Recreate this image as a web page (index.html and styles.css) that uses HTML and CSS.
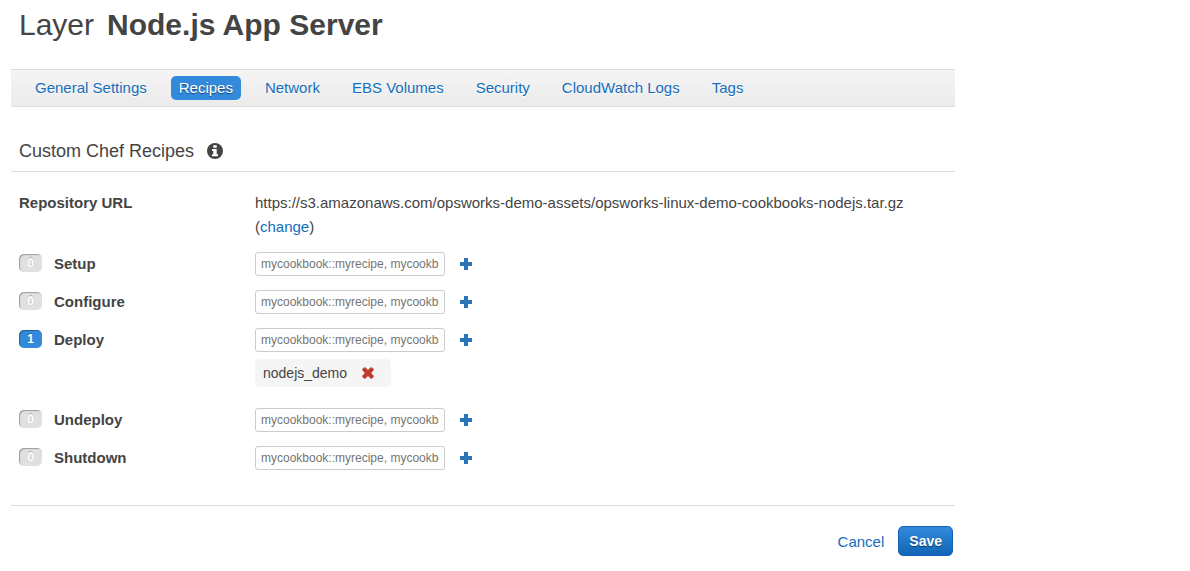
FILE: index.html
```html
<!DOCTYPE html>
<html lang="en">
<head>
<meta charset="utf-8">
<title>Layer Node.js App Server</title>
<link rel="stylesheet" href="styles.css">
</head>
<body>
<svg class="sprite" aria-hidden="true">
  <symbol id="plus" viewBox="0 0 12 12"><path d="M4 0h4v4h4v4H8v4H4V8H0V4h4z" fill="currentColor" shape-rendering="crispEdges"/></symbol>
</svg>
<main class="page">
  <h1 class="title"><span class="title-kind">Layer</span> <span>Node.js App Server</span></h1>
  <nav class="tabs">
    <a class="tab" href="#general">General Settings</a>
    <a class="tab tab-active" href="#recipes" aria-current="page">Recipes</a>
    <a class="tab" href="#network">Network</a>
    <a class="tab" href="#ebs">EBS Volumes</a>
    <a class="tab" href="#security">Security</a>
    <a class="tab" href="#logs">CloudWatch Logs</a>
    <a class="tab" href="#tags">Tags</a>
  </nav>
  <form>
    <h2 class="section-title">Custom Chef Recipes
      <svg class="info" viewBox="0 0 16 16" role="img" aria-label="Info"><circle cx="8" cy="8" r="8" fill="#444"/><path d="M6.3 2.2h3.4v2.6H6.3zM5 6h4.7v5.3H11v2H5v-2h1.3V8H5z" fill="#fff"/></svg>
    </h2>
    <div class="fields">
      <div class="row row-text">
        <div class="label">Repository URL</div>
        <div class="value">https://s3.amazonaws.com/opsworks-demo-assets/opsworks-linux-demo-cookbooks-nodejs.tar.gz<br>(<a href="#change">change</a>)</div>
      </div>
      <div class="row">
        <label class="label" for="setup"><span class="badge">0</span>Setup</label>
        <div class="entry"><input class="recipe" id="setup" type="text" placeholder="mycookbook::myrecipe, mycookbook::myrecipe2"><button class="icon-button" type="button" aria-label="Add setup recipe"><svg class="plus"><use href="#plus"/></svg></button></div>
      </div>
      <div class="row">
        <label class="label" for="configure"><span class="badge">0</span>Configure</label>
        <div class="entry"><input class="recipe" id="configure" type="text" placeholder="mycookbook::myrecipe, mycookbook::myrecipe2"><button class="icon-button" type="button" aria-label="Add configure recipe"><svg class="plus"><use href="#plus"/></svg></button></div>
      </div>
      <div class="row">
        <label class="label" for="deploy"><span class="badge badge-on">1</span>Deploy</label>
        <div>
          <div class="entry"><input class="recipe" id="deploy" type="text" placeholder="mycookbook::myrecipe, mycookbook::myrecipe2"><button class="icon-button" type="button" aria-label="Add deploy recipe"><svg class="plus"><use href="#plus"/></svg></button></div>
          <div class="chip">nodejs_demo<button class="icon-button remove" type="button" aria-label="Remove nodejs_demo"><svg class="cross" viewBox="0 0 12 12"><path d="M3 .4 6 3.2 9 .4Q10.8.4 11.6 3L8.8 6l2.8 3Q10.8 11.6 9 11.6L6 8.8l-3 2.8Q1.2 11.6.4 9L3.2 6 .4 3Q1.2.4 3 .4z" fill="currentColor" stroke="currentColor" stroke-width=".6"/></svg></button></div>
        </div>
      </div>
      <div class="row">
        <label class="label" for="undeploy"><span class="badge">0</span>Undeploy</label>
        <div class="entry"><input class="recipe" id="undeploy" type="text" placeholder="mycookbook::myrecipe, mycookbook::myrecipe2"><button class="icon-button" type="button" aria-label="Add undeploy recipe"><svg class="plus"><use href="#plus"/></svg></button></div>
      </div>
      <div class="row">
        <label class="label" for="shutdown"><span class="badge">0</span>Shutdown</label>
        <div class="entry"><input class="recipe" id="shutdown" type="text" placeholder="mycookbook::myrecipe, mycookbook::myrecipe2"><button class="icon-button" type="button" aria-label="Add shutdown recipe"><svg class="plus"><use href="#plus"/></svg></button></div>
      </div>
    </div>
    <div class="actions">
      <a class="cancel" href="#cancel">Cancel</a>
      <button class="save" type="submit">Save</button>
    </div>
  </form>
</main>
</body>
</html>
```
FILE: styles.css
```css
* { box-sizing: border-box; }
body {
  margin: 0;
  background: #fff;
  color: #444;
  font: 15px/24px "Liberation Sans", Arial, sans-serif;
}
a { color: #146eba; text-decoration: none; }
.sprite { display: none; }
.page { max-width: 944px; margin: 0 11px; }
.title {
  display: flex;
  gap: 13px;
  margin: 0 0 19px;
  padding: 0 8px;
  font-size: 30px;
  line-height: 50px;
}
.title-kind { font-weight: normal; }
.tabs {
  display: flex;
  flex-wrap: wrap;
  gap: 16px;
  padding: 6px 16px;
  border: solid #ddd;
  border-width: 1px 0;
  background: linear-gradient(#f5f5f5, #ebebeb);
}
.tab {
  padding: 0 8px;
  border-radius: 5px;
  text-shadow: 0 1px 0 #fff;
}
.tab-active {
  background: #338adb;
  color: #fff;
  text-shadow: 0 1px 1px rgba(0, 0, 0, 0.5);
}
.section-title {
  display: flex;
  align-items: center;
  gap: 13px;
  margin: 24px 0 0;
  padding: 0 8px;
  border-bottom: 1px solid #ddd;
  font-size: 18px;
  font-weight: normal;
  line-height: 40px;
}
.info { width: 16px; height: 16px; }
.fields { padding: 19px 8px 21px; }
.row {
  display: grid;
  grid-template-columns: 236px 1fr;
  margin-bottom: 14px;
}
.row-text { margin-bottom: 13px; }
.label { display: flex; align-items: flex-start; gap: 12px; font-weight: bold; }
.value { overflow-wrap: anywhere; }
.badge {
  width: 23px;
  height: 18px;
  margin-top: 2px;
  border-radius: 5px;
  background: #e0e0e0;
  box-shadow: inset 1px 1px 1px rgba(0, 0, 0, 0.3);
  color: #fff;
  font-size: 12px;
  line-height: 18px;
  text-align: center;
  text-shadow: 0 -1px 0 rgba(0, 0, 0, 0.25);
}
.badge-on { background: #338adb; }
.entry { display: flex; align-items: center; gap: 15px; }
.recipe {
  width: 190px;
  height: 24px;
  padding: 0 5px;
  border: 1px solid #ccc;
  border-radius: 3px;
  background: #fff;
  color: #444;
  font: 12px/22px "Liberation Sans", Arial, sans-serif;
}
.recipe::placeholder { color: #757575; }
.icon-button {
  display: flex;
  padding: 0;
  border: 0;
  background: none;
  color: #2b74b8;
}
.plus, .cross { width: 12px; height: 12px; }
.chip {
  display: flex;
  align-items: center;
  gap: 15px;
  width: fit-content;
  margin: 7px 0;
  padding: 0 17px 0 8px;
  border-radius: 5px;
  background: #f5f5f5;
  font-size: 14px;
  line-height: 28px;
}
.remove { color: #c0392b; }
.actions {
  display: flex;
  justify-content: flex-end;
  align-items: flex-start;
  gap: 14px;
  padding: 20px 2px 13px;
  border-top: 1px solid #ddd;
}
.cancel { line-height: 32px; }
.save {
  height: 30px;
  padding: 0 10px;
  border: 1px solid #1166bb;
  border-radius: 5px;
  background: linear-gradient(#338adb, #1166b5);
  color: #fff;
  font: bold 14px "Liberation Sans", Arial, sans-serif;
  text-shadow: 0 1px 1px rgba(0, 0, 0, 0.5);
}
```
